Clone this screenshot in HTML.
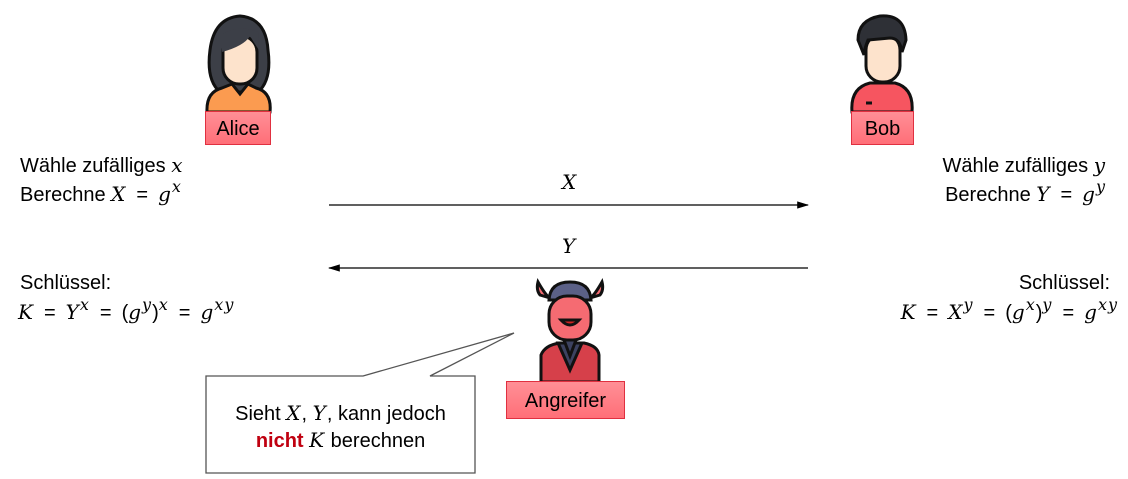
<!DOCTYPE html>
<html><head><meta charset="utf-8"><style>
body{margin:0;width:1128px;height:479px;background:#fff;position:relative;font-family:"Liberation Sans",sans-serif;font-size:20px;color:#000;overflow:hidden}
.a{position:absolute;white-space:nowrap;line-height:1}
i{font-family:"DejaVu Serif",serif;font-size:20px;letter-spacing:1px}
sup{font-size:16px;line-height:0;vertical-align:9px}
.e{margin:0 10px}
.lbl{position:absolute;background:linear-gradient(#ff8f96,#ff6f78);border:1px solid #e03040;box-sizing:border-box;text-align:center;font-size:20px}
</style></head><body>
<svg width="1128" height="479" style="position:absolute;left:0;top:0">
<defs><marker id="ar" markerWidth="10" markerHeight="8" refX="9" refY="4" orient="auto"><path d="M0,1L10,4L0,7z" fill="#000"/></marker></defs>
<line x1="329" y1="205" x2="808" y2="205" stroke="#000" stroke-width="1.2" marker-end="url(#ar)"/>
<line x1="808" y1="268" x2="329" y2="268" stroke="#000" stroke-width="1.2" marker-end="url(#ar)"/>
<g stroke="#111" stroke-width="3">
<path d="M220,92 Q206,80 210,50 Q214,18 240,16 Q266,18 268,50 Q272,80 258,92 Z" fill="#3c3f47"/>
<path d="M207,112 Q206,92 222,88 L232,84 L240,94 L248,84 L256,88 Q272,92 270,112 Z" fill="#fb9b50"/>
<rect x="223" y="36" width="34" height="48" rx="16" fill="#fde3cc"/>
<path d="M222,52 Q244,46 250,36 Q256,46 259,50 L258,32 Q240,24 222,34Z" fill="#3c3f47" stroke="none"/>
</g>
<g stroke="#111" stroke-width="3">
<path d="M852,112 Q850,88 870,83 L895,83 Q914,88 912,112 Z" fill="#f65560"/>
<rect x="866" y="34" width="34" height="48" rx="16" fill="#fde3cc"/>
<path d="M858,40 Q858,20 880,16 Q905,14 906,40 L902,52 Q900,38 890,38 L868,40 Q864,50 864,55 Z" fill="#2e3036"/>
<line x1="866" y1="103" x2="872" y2="103"/>
</g>
<g stroke="#111" stroke-width="3">
<path d="M541,382 L541,355 Q545,345 560,343 L584,343 Q598,346 599,355 L599,382Z" fill="#d6404a"/>
<path d="M558,343 L570,370 L582,343 Z" fill="#3c4260"/>
<path d="M540,295 Q536,290 538,282 Q546,296 550,298 Z" fill="#f56b72"/>
<path d="M600,295 Q604,290 602,282 Q594,296 590,298 Z" fill="#f56b72"/>
<path d="M549,300 Q550,282 570,282 Q590,282 591,300 Z" fill="#5b6087"/>
<rect x="549" y="296" width="42" height="44" rx="18" fill="#f56b72"/>
<path d="M561,320 Q570,330 579,320 Z" fill="#c22"/>
<path d="M564,340 L570,356 L576,340Z" fill="#3c4260"/>
</g>
<path d="M363,376 L514,333 L430,376 L475,376 L475,473 L206,473 L206,376 Z" fill="#fff" stroke="#555" stroke-width="1.3"/>
</svg>
<div class="lbl" style="left:205px;top:111px;width:66px;height:34px;line-height:34px">Alice</div>
<div class="lbl" style="left:851px;top:111px;width:63px;height:34px;line-height:34px">Bob</div>
<div class="lbl" style="left:506px;top:381px;width:119px;height:38px;line-height:38px">Angreifer</div>

<div class="a" style="left:20px;top:155px">Wähle zufälliges <i>x</i></div>
<div class="a" style="left:20px;top:184px">Berechne <i>X</i><span class="e">=</span><i>g<sup>x</sup></i></div>
<div class="a" style="left:20px;top:273px">Schlüssel:</div>
<div class="a" style="left:18px;top:302px"><i>K</i><span class="e">=</span><i>Y<sup>x</sup></i><span class="e">=</span>(<i>g<sup>y</sup></i>)<i><sup>x</sup></i><span class="e">=</span><i>g<sup>xy</sup></i></div>

<div class="a" style="right:22px;top:155px;text-align:right">Wähle zufälliges <i>y</i></div>
<div class="a" style="right:22px;top:184px">Berechne <i>Y</i><span class="e">=</span><i>g<sup>y</sup></i></div>
<div class="a" style="right:18px;top:273px">Schlüssel:</div>
<div class="a" style="right:10px;top:302px"><i>K</i><span class="e">=</span><i>X<sup>y</sup></i><span class="e">=</span>(<i>g<sup>x</sup></i>)<i><sup>y</sup></i><span class="e">=</span><i>g<sup>xy</sup></i></div>

<div class="a" style="left:562px;top:172px"><i>X</i></div>
<div class="a" style="left:562px;top:236px"><i>Y</i></div>

<div class="a" style="left:206px;width:269px;top:403px;text-align:center">Sieht <i>X</i>, <i>Y</i>, kann jedoch</div>
<div class="a" style="left:206px;width:269px;top:430px;text-align:center"><b style="color:#c00010">nicht</b> <i>K</i> berechnen</div>
</body></html>
